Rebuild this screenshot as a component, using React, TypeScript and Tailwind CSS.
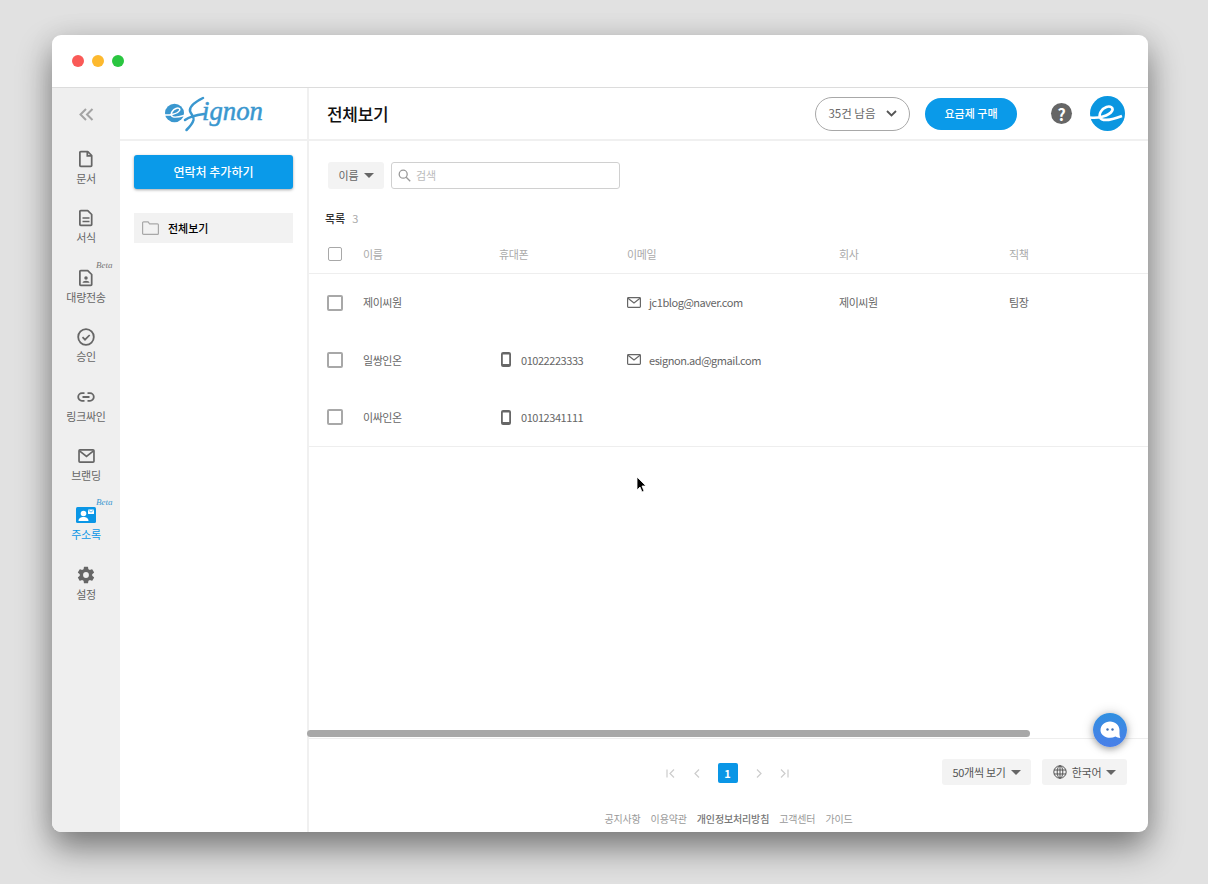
import type { ReactNode } from "react";

const NAV_ITEMS: { label: string; icon: ReactNode; beta?: boolean; active?: boolean }[] = [
  {
    label: "문서",
    icon: (
      <svg width="14" height="18" viewBox="0 0 16 20" fill="none" stroke="#666" strokeWidth="2">
        <path d="M2 1.500h8l4.500 4.500v11.500a1 1 0 0 1-1 1H2a1 1 0 0 1-1-1V2.500a1 1 0 0 1 1-1z" strokeLinejoin="round" />
        <path d="M9.500 1.500V6.500h5" />
      </svg>
    ),
  },
  {
    label: "서식",
    icon: (
      <svg width="14" height="18" viewBox="0 0 16 20" fill="none" stroke="#666" strokeWidth="2">
        <path d="M2 1.500h8l4.500 4.500v11.500a1 1 0 0 1-1 1H2a1 1 0 0 1-1-1V2.500a1 1 0 0 1 1-1z" strokeLinejoin="round" />
        <path d="M4 10h8M4 14h8" strokeWidth="1.600" />
      </svg>
    ),
  },
  {
    label: "대량전송",
    beta: true,
    icon: (
      <svg width="14" height="18" viewBox="0 0 16 20" fill="none" stroke="#666" strokeWidth="2">
        <path d="M2 1.500h8l4.500 4.500v11.500a1 1 0 0 1-1 1H2a1 1 0 0 1-1-1V2.500a1 1 0 0 1 1-1z" strokeLinejoin="round" />
        <circle cx="8" cy="10" r="2" fill="#666" stroke="none" />
        <path d="M4 15.500c0-1.500 2-2.300 4-2.300s4 .8 4 2.300z" fill="#666" stroke="none" />
      </svg>
    ),
  },
  {
    label: "승인",
    icon: (
      <svg width="18" height="18" viewBox="0 0 18 18" fill="none" stroke="#666" strokeWidth="1.800">
        <circle cx="9" cy="9" r="7.800" />
        <path d="M5.500 9.200l2.500 2.500 4.700-4.700" strokeWidth="1.700" />
      </svg>
    ),
  },
  {
    label: "링크싸인",
    icon: (
      <svg width="18" height="10" viewBox="0 0 18 10" fill="none" stroke="#666" strokeWidth="1.800">
        <path d="M7.500 1.200H5a3.800 3.800 0 0 0 0 7.600h2.500M10.500 1.200H13a3.800 3.800 0 0 1 0 7.600h-2.500M5.500 5h7" />
      </svg>
    ),
  },
  {
    label: "브랜딩",
    icon: (
      <svg width="17" height="14" viewBox="0 0 18 15" fill="none" stroke="#666" strokeWidth="1.800">
        <rect x="1" y="1" width="16" height="13" rx="1" />
        <path d="M1.500 2l7.500 6 7.500-6" />
      </svg>
    ),
  },
  {
    label: "주소록",
    beta: true,
    active: true,
    icon: (
      <svg width="20" height="16" viewBox="0 0 20 16">
        <rect width="20" height="16" rx="1.500" fill="#0a96e6" />
        <circle cx="7.500" cy="6.500" r="2.800" fill="#fff" />
        <path d="M2.500 14c0-2.800 2.300-4 5-4s5 1.200 5 4z" fill="#fff" />
        <rect x="12" y="2.500" width="6" height="4.500" rx=".6" fill="#fff" />
        <path d="M12.500 3.200l2.500 2 2.500-2" fill="none" stroke="#0a96e6" strokeWidth=".7" />
      </svg>
    ),
  },
  {
    label: "설정",
    icon: (
      <svg width="20" height="20" viewBox="0 0 24 24">
        <path
          fill="#666"
          fillRule="evenodd"
          d="M19.400 13c.04-.33.1-.66.1-1s-.06-.67-.1-1l2.100-1.650a.5.500 0 0 0 .12-.64l-2-3.460a.5.500 0 0 0-.6-.22l-2.500 1a7.300 7.300 0 0 0-1.700-1l-.38-2.650A.5.500 0 0 0 14 2h-4a.5.500 0 0 0-.5.420L9.130 5.070a7.700 7.700 0 0 0-1.700 1l-2.500-1a.5.500 0 0 0-.6.220l-2 3.460a.5.500 0 0 0 .12.640L4.550 11c-.04.330-.05.660-.05 1s.01.670.05 1l-2.100 1.650a.5.500 0 0 0-.12.640l2 3.460a.5.500 0 0 0 .6.220l2.500-1c.52.400 1.080.730 1.700 1l.37 2.650A.5.500 0 0 0 10 22h4a.5.500 0 0 0 .5-.420l.37-2.650a7.300 7.300 0 0 0 1.700-1l2.500 1a.5.500 0 0 0 .6-.220l2-3.460a.5.500 0 0 0-.12-.640L19.400 13zM12 15.500a3.500 3.500 0 1 1 0-7 3.500 3.500 0 0 1 0 7z"
        />
      </svg>
    ),
  },
];

const CONTACTS = [
  { name: "제이씨원", phone: "", email: "jc1blog@naver.com", company: "제이씨원", title: "팀장" },
  { name: "일쌍인온", phone: "01022223333", email: "esignon.ad@gmail.com", company: "", title: "" },
  { name: "이싸인온", phone: "01012341111", email: "", company: "", title: "" },
];

const FOOTER_LINKS = ["공지사항", "이용약관", "개인정보처리방침", "고객센터", "가이드"];

function Caret() {
  return <span className="inline-block w-0 h-0 border-x-[5px] border-x-transparent border-t-[5px] border-t-[#666]" />;
}

function MailIcon() {
  return (
    <svg width="14" height="11" viewBox="0 0 14 11" fill="none" stroke="#666" strokeWidth="1.200">
      <rect x=".6" y=".6" width="12.800" height="9.800" rx=".8" />
      <path d="M1 1.300l6 4.700 6-4.700" />
    </svg>
  );
}

function PhoneIcon() {
  return (
    <svg width="10" height="15" viewBox="0 0 10 15" fill="none">
      <rect x=".9" y=".9" width="8.200" height="13.200" rx="1.200" stroke="#666" strokeWidth="1.800" />
      <path d="M1 12h8v1.500a.8.800 0 0 1-.8.800H1.800a.8.800 0 0 1-.8-.8z" fill="#666" />
      <path d="M1 1h8v1.500H1z" fill="#666" />
    </svg>
  );
}

function Logo() {
  return (
    <svg width="100" height="36" viewBox="0 0 100 36" fill="none">
      <ellipse cx="10.500" cy="17" rx="9.500" ry="9.300" fill="#3a97cf" />
      <path d="M0 19c5 .5 13.500-1 15.500-4.500 1-1.800-1-3-3.500-2-3 1.200-5.500 4.500-4.500 7 .8 2 4 2.500 12.500 0" stroke="#fff" strokeWidth="1.500" />
      <path
        d="M39 2C31 6 25 10 26 15c.7 3.500 4.500 4.500 3.500 9-1 4-4 7-7 10M21 24c4-3 11-5 19-6"
        stroke="#3a97cf"
        strokeWidth="2.500"
        strokeLinecap="round"
      />
      <text
        x="38"
        y="24"
        textLength="61"
        lengthAdjust="spacingAndGlyphs"
        fontFamily="'Liberation Serif', serif"
        fontStyle="italic"
        fontSize="27"
        fill="#3a97cf"
        stroke="#3a97cf"
        strokeWidth=".5"
      >
        ignon
      </text>
    </svg>
  );
}

export default function App() {
  return (
    <div
      className="relative w-[1208px] h-[884px] overflow-hidden bg-[#e1e1e1] pt-[35px] pl-[52px] text-[#666]"
      style={{ fontFamily: "'Noto Sans CJK KR', 'Noto Sans', sans-serif" }}
    >
      <div className="relative w-[1096px] h-[797px] flex flex-col bg-white rounded-[9px] overflow-hidden shadow-[0_16px_34px_rgba(0,0,0,0.46),0_0_30px_rgba(0,0,0,0.06)]">
        {/* Title bar */}
        <div className="h-[53px] shrink-0 flex items-center gap-2 pl-5 border-b border-[#dcdcdc]">
          <span className="w-3 h-3 rounded-full bg-[#fa5a57]" />
          <span className="w-3 h-3 rounded-full bg-[#fdb92e]" />
          <span className="w-3 h-3 rounded-full bg-[#2ac640]" />
        </div>

        <div className="flex-1 flex min-h-0">
          {/* Icon nav */}
          <div className="w-[68px] shrink-0 bg-[#efefef] flex flex-col items-center">
            <svg className="mt-[20px] mb-[28px]" width="15" height="13" viewBox="0 0 15 13" fill="none" stroke="#a3a3a3" strokeWidth="2">
              <path d="M7 1L1.500 6.500 7 12M13.500 1L8 6.500l5.500 5.500" />
            </svg>
            {NAV_ITEMS.map(item => (
              <div key={item.label} className="relative w-full h-[59.400px] shrink-0 flex flex-col items-center">
                <div className="h-[20px] flex items-center justify-center">{item.icon}</div>
                <span className={`text-[11px] leading-[18px] tracking-[-0.3px] ${item.active ? "text-[#0a96e6]" : "text-[#666]"}`}>
                  {item.label}
                </span>
                {item.beta && (
                  <span
                    className={`absolute left-[44px] top-[-9px] text-[9px] italic leading-[12px] ${item.active ? "text-[#3a97cf]" : "text-[#777]"}`}
                    style={{ fontFamily: "'Liberation Serif', serif" }}
                  >
                    Beta
                  </span>
                )}
              </div>
            ))}
          </div>

          {/* Folder panel */}
          <div className="w-[189px] shrink-0 flex flex-col border-r-2 border-[#f0f0f0]">
            <div className="h-[53px] shrink-0 flex items-center justify-center border-b-2 border-[#f0f0f0]">
              <Logo />
            </div>
            <div className="pl-[14px] pr-[14px] pt-[14px]">
              <button className="w-full h-[34px] rounded-[3px] bg-[#0a9ae9] text-white text-[12px] font-medium shadow-[0_1px_3px_rgba(0,0,0,0.35)]">
                연락처 추가하기
              </button>
              <div className="mt-[24px] h-[30px] bg-[#f2f2f2] flex items-center gap-[9px] pl-[8px] text-[11px] font-medium text-black">
                <svg width="17" height="14" viewBox="0 0 17 14" fill="none" stroke="#a8a8a8" strokeWidth="1.200">
                  <path d="M1.600.8h4.500l1.500 2h7.800a1 1 0 0 1 1 1v8.600a1 1 0 0 1-1 1H1.600a1 1 0 0 1-1-1V1.800a1 1 0 0 1 1-1z" />
                </svg>
                전체보기
              </div>
            </div>
          </div>

          {/* Main */}
          <div className="flex-1 min-w-0 flex flex-col">
            <div className="h-[53px] shrink-0 flex items-center pl-[18px] pr-[23px] border-b-2 border-[#f0f0f0]">
              <h1 className="text-[17px] font-medium tracking-[-0.3px] text-[#111]">전체보기</h1>
              <div className="ml-auto flex items-center">
                <button className="w-[95px] h-[34px] rounded-full border border-[#a8a8a8] flex items-center justify-center gap-[10px] text-[11.500px] text-[#666]">
                  35건 남음
                  <svg width="11" height="7" viewBox="0 0 11 7" fill="none" stroke="#555" strokeWidth="1.800">
                    <path d="M1 1l4.500 4.500L10 1" />
                  </svg>
                </button>
                <button className="ml-[15px] w-[92px] h-[32px] rounded-full bg-[#0a9ae9] text-white text-[11px] font-medium">
                  요금제 구매
                </button>
                <span className="ml-[34px] w-[21px] h-[21px] rounded-full bg-[#666] text-white flex items-center justify-center text-[16px] leading-none font-bold">
                  ?
                </span>
                <svg className="ml-[18px]" width="35" height="35" viewBox="0 0 35 35" fill="none">
                  <circle cx="17.500" cy="17.500" r="17.500" fill="#0a96e0" />
                  <path
                    d="M0 21.500c8 1 19-1.500 22-6.500 1.800-3-1.500-5.500-5.500-4-5 1.800-8 7-6.500 10.500 1.500 3.300 9 3.500 22-1.500"
                    stroke="#fff"
                    strokeWidth="2.600"
                  />
                </svg>
              </div>
            </div>

            {/* Search */}
            <div className="pl-[19px] pt-[21px] flex gap-[7px]">
              <button className="w-[56px] h-[27px] rounded-[3px] bg-[#f3f3f3] flex items-center justify-center gap-[5px] text-[11px] text-[#666]">
                이름
                <Caret />
              </button>
              <div className="w-[229px] h-[27px] rounded-[3px] border border-[#d0d0d0] flex items-center gap-[5px] pl-[6px] text-[11px] text-[#bbb]">
                <svg width="13" height="13" viewBox="0 0 13 13" fill="none" stroke="#999" strokeWidth="1.300">
                  <circle cx="5.200" cy="5.200" r="4" />
                  <path d="M8.200 8.200l4 4" />
                </svg>
                검색
              </div>
            </div>

            <div className="pl-[16px] mt-[20px] h-[18px] flex items-center gap-[7px] text-[11px]">
              <span className="font-medium text-[#333]">목록</span>
              <span className="text-[#aaa]">3</span>
            </div>

            {/* Table */}
            <div className="mt-[8px] h-[39px] grid grid-cols-[54px_136px_128px_212px_170px_1fr] items-center border-b border-[#eee] text-[11px] tracking-[-0.4px] text-[#aaa]">
              <span className="ml-[19px] w-[14px] h-[14px] rounded-[2px] border-[1.500px] border-[#a8a8a8]" />
              <span>이름</span>
              <span>휴대폰</span>
              <span>이메일</span>
              <span>회사</span>
              <span>직책</span>
            </div>
            <div className="border-b border-[#eee]">
              {CONTACTS.map(c => (
                <div
                  key={c.name}
                  className="h-[57.300px] grid grid-cols-[54px_136px_128px_212px_170px_1fr] items-center text-[11px] tracking-[-0.45px] text-[#666]"
                >
                  <span className="ml-[18px] w-4 h-4 rounded-[2px] border-2 border-[#a8a8a8]" />
                  <span>{c.name}</span>
                  <span className="flex items-center gap-[10px] pl-[2px]">
                    {c.phone && <PhoneIcon />}
                    {c.phone}
                  </span>
                  <span className="flex items-center gap-[8px]">
                    {c.email && <MailIcon />}
                    {c.email}
                  </span>
                  <span>{c.company}</span>
                  <span>{c.title}</span>
                </div>
              ))}
            </div>

            <div className="flex-1" />

            {/* Scrollbar */}
            <div className="-ml-[2px] w-[723px] h-[7px] rounded-full bg-[#a8a8a8]" />
            <div className="mt-[1px] h-[60px] shrink-0 border-t border-[#eee] flex items-start pl-[18px] pr-[21px]">
              <div className="flex-1" />
              <div className="mt-[24px] flex items-center gap-[18px] text-[#ccc]">
                <svg width="9" height="9" viewBox="0 0 9 9" fill="none" stroke="#ccc" strokeWidth="1.200">
                  <path d="M1 .5v8M8 .5L4 4.500l4 4" />
                </svg>
                <svg className="ml-[1px]" width="6" height="9" viewBox="0 0 6 9" fill="none" stroke="#ccc" strokeWidth="1.200">
                  <path d="M5 .5L1 4.500l4 4" />
                </svg>
                <span className="w-[20px] h-[20px] rounded-[2px] bg-[#0a96e6] text-white flex items-center justify-center text-[11px] font-bold">
                  1
                </span>
                <svg width="6" height="9" viewBox="0 0 6 9" fill="none" stroke="#ccc" strokeWidth="1.200">
                  <path d="M1 .5l4 4-4 4" />
                </svg>
                <svg width="9" height="9" viewBox="0 0 9 9" fill="none" stroke="#ccc" strokeWidth="1.200">
                  <path d="M8 .5v8M1 .5l4 4-4 4" />
                </svg>
              </div>
              <div className="flex-1 flex justify-end gap-[11px] mt-[20px]">
                <button className="w-[89px] h-[26px] rounded-[3px] bg-[#f3f3f3] flex items-center justify-center gap-[5px] text-[11px] tracking-[-0.3px] text-[#555]">
                  50개씩 보기
                  <Caret />
                </button>
                <button className="w-[85px] h-[26px] rounded-[3px] bg-[#f3f3f3] flex items-center justify-center gap-[5px] text-[11px] tracking-[-0.3px] text-[#555]">
                  <svg width="14" height="14" viewBox="0 0 14 14" fill="none" stroke="#555" strokeWidth="1">
                    <circle cx="7" cy="7" r="6.200" />
                    <ellipse cx="7" cy="7" rx="2.800" ry="6.200" />
                    <path d="M1 5h12M1 9h12M7 .8v12.400" />
                  </svg>
                  한국어
                  <Caret />
                </button>
              </div>
            </div>
            <div className="h-[34px] shrink-0 pt-[6px] flex items-center justify-center gap-[10px] text-[10px] tracking-[-0.15px] text-[#999]">
              {FOOTER_LINKS.map(link => (
                <span key={link} className={link === "개인정보처리방침" ? "font-medium text-[#777]" : ""}>
                  {link}
                </span>
              ))}
            </div>
          </div>
        </div>

        {/* Chat widget */}
        <div className="absolute left-[1041px] top-[678px] w-[34px] h-[34px] rounded-full bg-gradient-to-b from-[#2f8fe0] to-[#4a7fe8] flex items-center justify-center shadow-[0_2px_6px_rgba(0,0,0,0.3),0_0_10px_4px_rgba(0,0,0,0.08)]">
          <svg width="22" height="21" viewBox="0 0 22 21">
            <path d="M11 1.500c5.200 0 9.500 3.900 9.500 8.700 0 2.500-.2 5 .8 7.800-1.800 0-3.600-.6-4.900-1.400-1.600.8-3.400 1.200-5.400 1.200-5.200 0-9.500-3.500-9.500-7.600 0-4.800 4.300-8.700 9.500-8.700z" fill="#fff" />
            <circle cx="8.500" cy="9.500" r="1.200" fill="#3f6fb5" />
            <circle cx="13.500" cy="9.500" r="1.200" fill="#3f6fb5" />
          </svg>
        </div>

        {/* Mouse cursor */}
        <svg className="absolute left-[584px] top-[441px]" width="11" height="18" viewBox="0 0 11 18">
          <path d="M1 1v13l3-3 2 5 2-1-2-5h4z" fill="#000" stroke="#fff" strokeWidth=".8" />
        </svg>
      </div>
    </div>
  );
}
